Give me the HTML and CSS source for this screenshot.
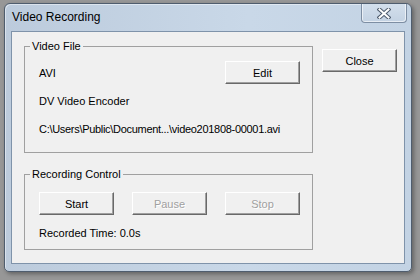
FILE: index.html
```html
<!DOCTYPE html>
<html>
<head>
<meta charset="utf-8">
<link rel="stylesheet" href="styles.css">
</head>
<body>
<div class="window">
  <div class="titlebar">
    <span class="title">Video Recording</span>
    <button class="close-x" aria-label="Close">
      <svg width="14" height="11" viewBox="0 0 14 11">
        <path d="M2.5 1.5 L11.5 9.5 M11.5 1.5 L2.5 9.5" stroke="#4d5b6c" stroke-width="4" stroke-linecap="square" fill="none"/>
        <path d="M2.5 1.5 L11.5 9.5 M11.5 1.5 L2.5 9.5" stroke="#ffffff" stroke-width="2" stroke-linecap="square" fill="none"/>
      </svg>
    </button>
  </div>
  <div class="client">
    <div class="groups">
      <fieldset class="group group-file">
        <legend>Video File</legend>
        <div class="row-first">
          <span>AVI</span>
          <button class="btn">Edit</button>
        </div>
        <div class="line line-enc">DV Video Encoder</div>
        <div class="line line-path">C:\Users\Public\Document...\video201808-00001.avi</div>
      </fieldset>
      <fieldset class="group group-rec">
        <legend>Recording Control</legend>
        <div class="btn-row">
          <button class="btn">Start</button>
          <button class="btn" disabled>Pause</button>
          <button class="btn" disabled>Stop</button>
        </div>
        <div class="line line-time">Recorded Time: 0.0s</div>
      </fieldset>
    </div>
    <div class="side">
      <button class="btn">Close</button>
    </div>
  </div>
</div>
</body>
</html>
```
FILE: styles.css
```css
html, body {
  margin: 0;
  padding: 0;
}
body {
  width: 420px;
  height: 280px;
  overflow: hidden;
  background: #979797;
  padding: 3px 0 0 4px;
  box-sizing: border-box;
  font-family: "Liberation Sans", Arial, sans-serif;
  font-size: 11px;
  color: #000;
}
.window {
  width: 408px;
  height: 269px;
  box-sizing: border-box;
  border: 1px solid #4f5d6e;
  border-radius: 6px 6px 5px 5px;
  background: linear-gradient(90deg, #bccbdc 0%, #c9d8e8 60%, #c3d3e4 100%);
  padding: 0 6px 7px 6px;
  display: flex;
  flex-direction: column;
  box-shadow: 2px 2px 4px rgba(0,0,0,0.35), inset 1px 1px 0 rgba(255,255,255,0.45);
}
.titlebar {
  height: 27px;
  display: flex;
  align-items: flex-start;
  flex-shrink: 0;
  margin: 0 -2px 0 1px;
}
.title {
  font-size: 12px;
  line-height: 15px;
  padding-top: 6px;
  color: #000;
}
.close-x {
  margin-left: auto;
  width: 46px;
  height: 19px;
  padding: 0;
  border: 1px solid #7d8ea3;
  border-top: none;
  border-radius: 0 0 4px 4px;
  background: linear-gradient(#d3dfec, #c3d2e3);
  box-shadow: inset 1px 0 0 rgba(255,255,255,0.6), inset -1px -1px 0 rgba(255,255,255,0.6);
  display: flex;
  align-items: center;
  justify-content: center;
}
.close-x svg { display: block; }
.client {
  flex: 1;
  box-sizing: border-box;
  border: 1px solid #7f93aa;
  background: #f0f0f0;
  padding: 8px 0 0 12px;
  display: grid;
  grid-template-columns: 289px 75px;
  column-gap: 9px;
  align-items: start;
}
.groups {
  display: flex;
  flex-direction: column;
}
.group {
  margin: 0;
  border: 1px solid #a0a0a0;
  padding: 8px 12px 16px 14px;
  min-width: 0;
}
.group legend {
  font-size: 11px;
  line-height: 13px;
  padding: 0 2px;
  margin-left: -9px;
}
.group-rec {
  margin-top: 15px;
  padding: 11px 12px 9px 14px;
}
.row-first {
  height: 23px;
  display: flex;
  align-items: center;
  justify-content: space-between;
}
.line {
  line-height: 13px;
  white-space: nowrap;
}
.line-enc { margin-top: 11px; }
.line-path { margin-top: 15px; letter-spacing: -0.3px; }
.line-time { margin-top: 12px; }
.btn-row {
  display: flex;
  justify-content: space-between;
}
.btn {
  width: 75px;
  height: 23px;
  box-sizing: border-box;
  margin: 0;
  padding: 0;
  font-family: "Liberation Sans", Arial, sans-serif;
  font-size: 11px;
  color: #000;
  background: #f0f0f0;
  border: 1px solid;
  border-color: #ffffff #696969 #696969 #ffffff;
  box-shadow: inset -1px -1px 0 #a0a0a0;
  border-radius: 0;
}
.btn:disabled {
  color: #a0a0a0;
  text-shadow: 1px 1px 0 #ffffff;
}
.side {
  padding-top: 9px;
}
```
